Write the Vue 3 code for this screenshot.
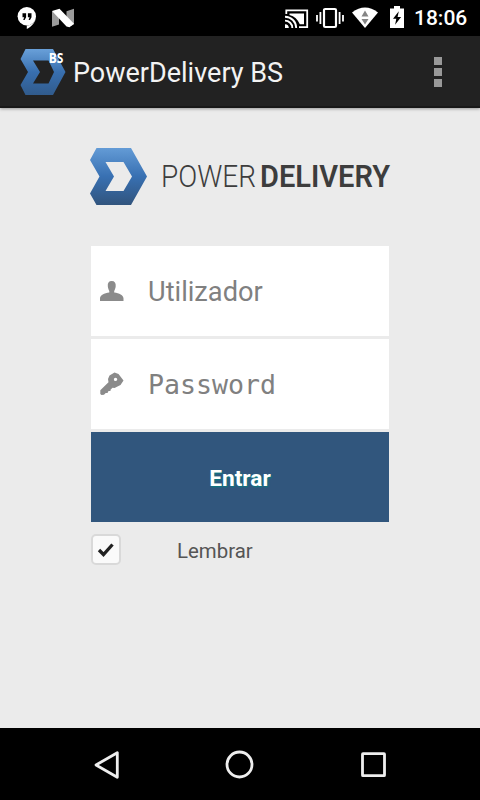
<script setup>
import { ref } from 'vue'

const user = ref('')
const password = ref('')
const remember = ref(true)
</script>

<template>
  <div class="screen">
    <header class="status">
      <div class="notifications">
        <svg class="hangouts" width="20" height="24" viewBox="0 0 20 24">
          <path d="M9.800 1a9.200 9.200 0 1 1 0 18.400V23C15 20.500 19 15.500 19 10.200A9.200 9.200 0 0 0 9.800 1z" fill="#fff" />
          <circle cx="9.800" cy="10.200" r="9.200" fill="#fff" />
          <path d="M5.500 7.300h3.600v4L7.600 14H6.200l1-2.700H5.500zM10.900 7.300h3.600v4L13 14h-1.400l1-2.700h-1.700z" fill="#000" />
        </svg>
        <svg width="24" height="20" viewBox="0 0 24 20">
          <path d="M1 3 8 7v9.500l-7 2.300zM15.500 3.200 23 .8v15.400l-3 1.800-4.500-5z" fill="#9b9b9b" />
          <path d="M1 3 8.500.7 23 15.800 18.500 19.300 15.500 18.500z" fill="#fff" />
        </svg>
      </div>
      <div class="system">
        <svg class="cast" width="24" height="20" viewBox="0 0 24 20">
          <path d="M1.300 5V1.300h20.900v16.900H14" fill="none" stroke="#fff" stroke-width="1.800" />
          <path d="M4.500 4.500H19v10.800h-4.200C12.800 10.300 9.500 7.300 4.500 6z" fill="#fff" />
          <path d="M0 7.700a11.200 11.200 0 0 1 11.200 11.200M0 11.600a7.300 7.300 0 0 1 7.300 7.300" fill="none" stroke="#fff" stroke-width="1.900" />
          <path d="M0 15.200A3.800 3.800 0 0 1 3.800 19H0z" fill="#fff" />
        </svg>
        <svg class="vibrate" width="28" height="22" viewBox="0 0 28 22">
          <rect x="8" y="2" width="12" height="18" rx="1.200" fill="none" stroke="#fff" stroke-width="2.200" />
          <path d="M4.400 5v12M1 8v6.500M23.600 5v12M27 8v6.500" stroke="#fff" stroke-width="1.800" />
        </svg>
        <svg class="wifi" width="26" height="21" viewBox="0 0 26 21">
          <path d="M0 5.500Q13-4.500 26 5.500L13 21z" fill="#fff" />
          <path d="m13 3.500 3.500 6h-7zM13 17.500l-3.500-5.500h7z" fill="#858585" />
        </svg>
        <svg class="battery" width="14" height="22" viewBox="0 0 14 22">
          <path d="M0 2.500h4V0h6v2.500h4V22H0z" fill="#fff" />
          <path d="M8.800 5.300 3 12.700h3.300l-1.200 6 6-7.700H7.600z" fill="#000" />
        </svg>
        <time class="clock">18:06</time>
      </div>
    </header>

    <div class="actionbar">
      <svg class="app-icon" width="46" height="48" viewBox="0 0 46 48">
        <defs>
          <linearGradient id="appBlue" x1="0" y1="0" x2="0" y2="1">
            <stop offset="0" stop-color="#69a0d9" />
            <stop offset=".5" stop-color="#386faf" />
            <stop offset="1" stop-color="#315b8c" />
          </linearGradient>
        </defs>
        <path fill="url(#appBlue)" fill-rule="evenodd" d="M5.500 1H33L45.500 24 33 47H5.500L.5 37 8 24 .5 11zM13 12.500 20 24l-7 11.500h15.500L34 24l-5.500-11.500z" />
        <text x="28.800" y="14.700" textLength="14.600" lengthAdjust="spacingAndGlyphs" class="badge">BS</text>
      </svg>
      <h1 class="title">PowerDelivery BS</h1>
      <button class="overflow" aria-label="Menu"><i></i><i></i><i></i></button>
    </div>

    <main class="content">
      <svg class="brand" width="302" height="58" viewBox="0 0 302 58">
        <defs>
          <linearGradient id="brandBlue" x1="0" y1="0" x2="0" y2="1">
            <stop offset="0" stop-color="#639bd6" />
            <stop offset=".5" stop-color="#3870b2" />
            <stop offset="1" stop-color="#31547d" />
          </linearGradient>
        </defs>
        <path fill="url(#brandBlue)" fill-rule="evenodd" d="M6.500 0H41L57 28.500 41 57H6.500L0 45.500 9.500 28.500 0 12zM15.500 14 24 28.500 15.500 43H33.500L42 28.500 33.500 14z" />
        <text x="71" y="39.300" textLength="95" lengthAdjust="spacingAndGlyphs" class="power">POWER</text>
        <text x="170" y="39.300" textLength="130" lengthAdjust="spacingAndGlyphs" class="delivery">DELIVERY</text>
      </svg>

      <form class="login" @submit.prevent>
        <label class="field">
          <svg width="24" height="22" viewBox="0 0 24 22">
            <path d="M11.700 1c3 0 4.300 2 4 5.300-.2 2-.8 3.400-1.500 4.600v1.600c5 .8 9.300 2.500 9.300 6V21H0v-2.500c0-3.500 4.300-5.200 9.300-6v-1.600C8.600 9.700 8 8.300 7.800 6.300 7.500 3 8.700 1 11.700 1z" fill="#8b8b8b" />
          </svg>
          <input v-model="user" placeholder="Utilizador" />
        </label>
        <label class="field">
          <svg width="24" height="24" viewBox="0 0 24 24">
            <path fill="#8b8b8b" fill-rule="evenodd" d="M9.500 3.500 14.500.5 18.500 2 23.500 8.500 20.500 13 14.500 16 12.500 15.700 10.500 17.700V19H8.500L7.500 21H5.700L4 22.800 1.500 23 .3 22V18.200L8.500 10.200 8 7zM15.500 5.700a1.700 1.700 0 1 0 .1 3.400 1.700 1.700 0 0 0-.1-3.400z" />
          </svg>
          <input v-model="password" class="mono" type="password" placeholder="Password" />
        </label>
        <button class="submit">Entrar</button>
        <label class="remember">
          <input v-model="remember" type="checkbox" class="native" />
          <span class="box">
            <svg v-if="remember" width="18" height="16" viewBox="0 0 18 16">
              <path d="m2 8 4.500 4.500L15.500 2.500" fill="none" stroke="#222" stroke-width="3.300" />
            </svg>
          </span>
          <span class="caption">Lembrar</span>
        </label>
      </form>
    </main>

    <nav class="navbar">
      <svg width="28" height="30" viewBox="0 0 28 30"><path d="M25.300 2.700v24.600L4 15z" fill="none" stroke="#eee" stroke-width="2.800" stroke-linejoin="round" /></svg>
      <svg width="30" height="30" viewBox="0 0 30 30"><circle cx="14.500" cy="14.500" r="12.500" fill="none" stroke="#eee" stroke-width="2.800" /></svg>
      <svg width="28" height="28" viewBox="0 0 28 28"><rect x="3.500" y="2.700" width="22" height="22" rx=".5" fill="none" stroke="#eee" stroke-width="2.800" /></svg>
    </nav>
  </div>
</template>

<style>
body {
  background: #ebebeb;
}
</style>

<style scoped>
.screen {
  width: 480px;
  height: 800px;
  display: flex;
  flex-direction: column;
  overflow: hidden;
  background: #ebebeb;
  font-family: Roboto, sans-serif;
}
svg {
  display: block;
  flex: none;
}
.status {
  height: 36px;
  display: flex;
  justify-content: space-between;
  align-items: center;
  box-sizing: border-box;
  padding: 0 12px 0 17px;
  background: #000;
}
.notifications,
.system {
  display: flex;
  align-items: center;
}
.notifications {
  gap: 14px;
}
.cast {
  margin-top: 1px;
}
.vibrate {
  margin-left: 7px;
}
.wifi {
  margin-left: 8px;
  margin-bottom: 2px;
}
.battery {
  margin-left: 12px;
  margin-bottom: 2px;
}
.clock {
  width: 54px;
  margin-left: 10px;
  color: #fff;
  font-size: 21px;
  font-weight: 500;
  line-height: 37px;
  white-space: nowrap;
}
.actionbar {
  height: 72px;
  box-sizing: border-box;
  display: flex;
  align-items: center;
  padding: 2px 27px 0 20px;
  background: #222;
  border-bottom: 2px solid #181818;
  box-shadow: 0 1px 3px rgba(0, 0, 0, 0.35);
}
.badge {
  fill: #fff;
  font: 700 14px "Open Sans", sans-serif;
}
.title {
  flex: 1;
  margin: 2px 0 0 7px;
  color: #f3f3f3;
  font-size: 27px;
  font-weight: 400;
  line-height: 36px;
  white-space: nowrap;
}
.overflow {
  width: 30px;
  padding: 0;
  border: 0;
  background: none;
  display: flex;
  flex-direction: column;
  align-items: center;
  gap: 3px;
}
.overflow i {
  width: 8px;
  height: 8px;
  background: #999;
}
.content {
  flex: 1;
  padding: 40px 88px 0 90px;
}
.brand {
  overflow: visible;
}
.power,
.delivery {
  fill: #3d3d3d;
  font-family: Roboto, sans-serif;
  font-size: 31px;
}
.power {
  font-weight: 300;
}
.delivery {
  font-weight: 600;
}
.login {
  width: 298px;
  margin: 40px 0 0 1px;
  display: flex;
  flex-direction: column;
  gap: 3px;
}
.field {
  height: 90px;
  display: flex;
  align-items: center;
  gap: 24px;
  box-sizing: border-box;
  padding-left: 9px;
  background: #fff;
}
.field input {
  flex: 1;
  min-width: 0;
  padding: 2px 0 0;
  border: 0;
  outline: 0;
  background: none;
  font: 27.200px Roboto, sans-serif;
}
.field input.mono {
  padding: 0;
  font: 26.600px "DejaVu Sans Mono", monospace;
}
.field input::placeholder {
  color: #808080;
  opacity: 1;
}
.submit {
  height: 90px;
  padding: 2px 0 0;
  border: 0;
  background: #31567d;
  color: #fff;
  font: 700 22.700px Roboto, sans-serif;
  text-shadow: 1px 1px 2px #008080;
}
.remember {
  margin-top: 9px;
  display: flex;
  align-items: center;
}
.native {
  display: none;
}
.box {
  width: 30px;
  height: 31px;
  box-sizing: border-box;
  display: flex;
  align-items: center;
  justify-content: center;
  border: 2px solid #d9d9d9;
  border-radius: 5px;
  background: #fafafa;
}
.caption {
  margin: 2px 0 0 56px;
  color: #555;
  font-size: 20.400px;
}
.navbar {
  height: 72px;
  box-sizing: border-box;
  display: flex;
  align-items: center;
  justify-content: space-between;
  padding: 1px 93px 0 92px;
  background: #000;
}
</style>
